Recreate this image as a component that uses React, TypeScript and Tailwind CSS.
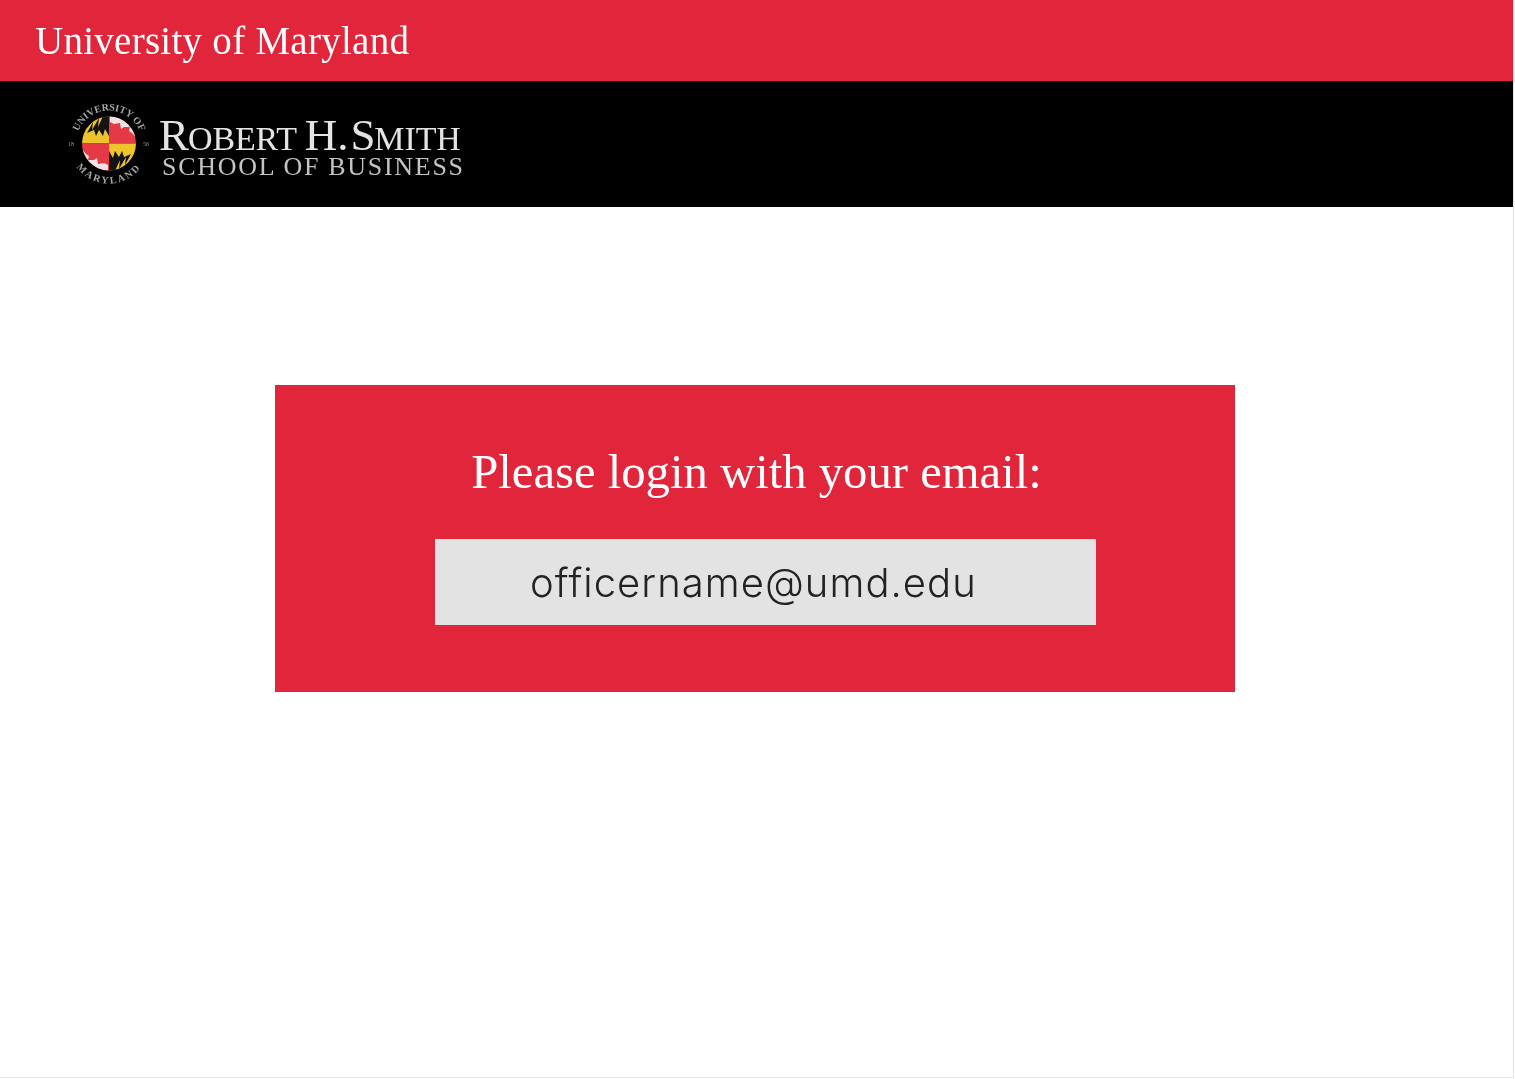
export default function App() {
  return (
    <div className="w-[1515px] h-[1079px] bg-white overflow-hidden">
      <div className="w-[1514px] h-[1078px] border-r border-b border-[#e6e6e6] flex flex-col">
        <header className="h-[81px] bg-[#e1253b] flex items-center pl-[35px] shrink-0">
          <span className="text-white text-[39px] leading-none font-['Liberation_Serif',serif] tracking-[0.27px] blur-[0.3px]">University of Maryland</span>
        </header>
        <div className="h-[126px] bg-black flex items-center pl-[68px] shrink-0">
          <svg width="84" height="88" viewBox="0 0 84 88" className="shrink-0 blur-[0.5px]">
            <defs>
              <path id="arcTop" d="M8 43.5 A33 33 0 0 1 74 43.5" />
              <path id="arcBottom" d="M1 43.5 A40 40 0 0 0 81 43.5" />
              <clipPath id="globe"><circle cx="41" cy="43.5" r="27" /></clipPath>
            </defs>
            <text fill="#a6a6a6" fontSize="10" fontWeight="700" fontFamily="'Liberation Serif',serif" letterSpacing="0">
              <textPath href="#arcTop" startOffset="50%" textAnchor="middle">UNIVERSITY OF</textPath>
            </text>
            <text fill="#a6a6a6" fontSize="10" fontWeight="700" fontFamily="'Liberation Serif',serif" letterSpacing="2">
              <textPath href="#arcBottom" startOffset="50%" textAnchor="middle">MARYLAND</textPath>
            </text>
            <text x="0" y="46" fill="#9a9a9a" fontSize="6" fontFamily="'Liberation Serif',serif">18</text>
            <text x="75" y="46" fill="#9a9a9a" fontSize="6" fontFamily="'Liberation Serif',serif">56</text>
            <g clipPath="url(#globe)">
              <rect x="14" y="16" width="27" height="27.5" fill="#eec42c" />
              <rect x="41" y="16" width="27" height="27.5" fill="#e53a45" />
              <rect x="14" y="43.5" width="27" height="27.5" fill="#e53a45" />
              <rect x="41" y="43.5" width="27" height="27.5" fill="#eec42c" />
              <path d="M19 33 L25 22 L24 30 L31 18 L30 27 L35 16 L41 16 L41 36 L37 29 L35 36 L31 30 L28 36 L26 30 Z" fill="#141414" />
              <path d="M63 54 L57 65 L58 57 L51 69 L52 60 L47 71 L41 71 L41 51 L45 58 L47 51 L51 57 L54 51 L56 57 Z" fill="#141414" />
              <path d="M42 16 L54 17 L68 30 L68 38 L64 33 L61 31 L62 27 L56 27 L53 29 L52 23 L46 24 L42 22 Z" fill="#f1e3e3" />
              <path d="M14 49 L18 54 L21 56 L20 60 L26 60 L29 58 L30 64 L36 63 L40 65 L40 71 L28 70 L14 57 Z" fill="#f1e3e3" />
            </g>
          </svg>
          <div className="ml-[7px] mt-[10px] flex flex-col font-['Liberation_Serif',serif] text-[#e4e4e4] blur-[0.4px]">
            <div className="h-[30px] flex items-baseline whitespace-nowrap leading-[30px] text-[34px] tracking-[-0.1px]">
              <span className="text-[45px] mr-[-1px]">R</span>
              <span>OBERT</span>
              <span className="text-[45px] ml-[8px]">H</span>
              <span className="text-[45px] mr-[2px]">.</span>
              <span className="text-[45px] mr-[-1px]">S</span>
              <span>MITH</span>
            </div>
            <div className="h-[22px] mt-[6px] pl-[3px] whitespace-nowrap leading-[22px] text-[26px] tracking-[1.7px] text-[#c4c4c4]">
              SCHOOL OF BUSINESS
            </div>
          </div>
        </div>
        <main className="flex-1 pt-[178px] pl-[275px]">
          <section className="w-[960px] h-[307px] bg-[#e1253b] pt-[57px] pl-[160px]">
            <h1 className="w-[661px] text-center text-white text-[48.7px] leading-[60px] font-['Liberation_Serif',serif] pr-[18px] blur-[0.3px]">
              Please login with your email:
            </h1>
            <div className="mt-[37px] w-[661px] h-[86px] bg-[#e3e3e3] flex items-center pl-[95px] pt-[2px]">
              <span className="text-[#222] text-[40px] leading-none font-light tracking-[1.05px] font-['Inter',sans-serif] blur-[0.3px]">officername@umd.edu</span>
            </div>
          </section>
        </main>
      </div>
    </div>
  );
}
